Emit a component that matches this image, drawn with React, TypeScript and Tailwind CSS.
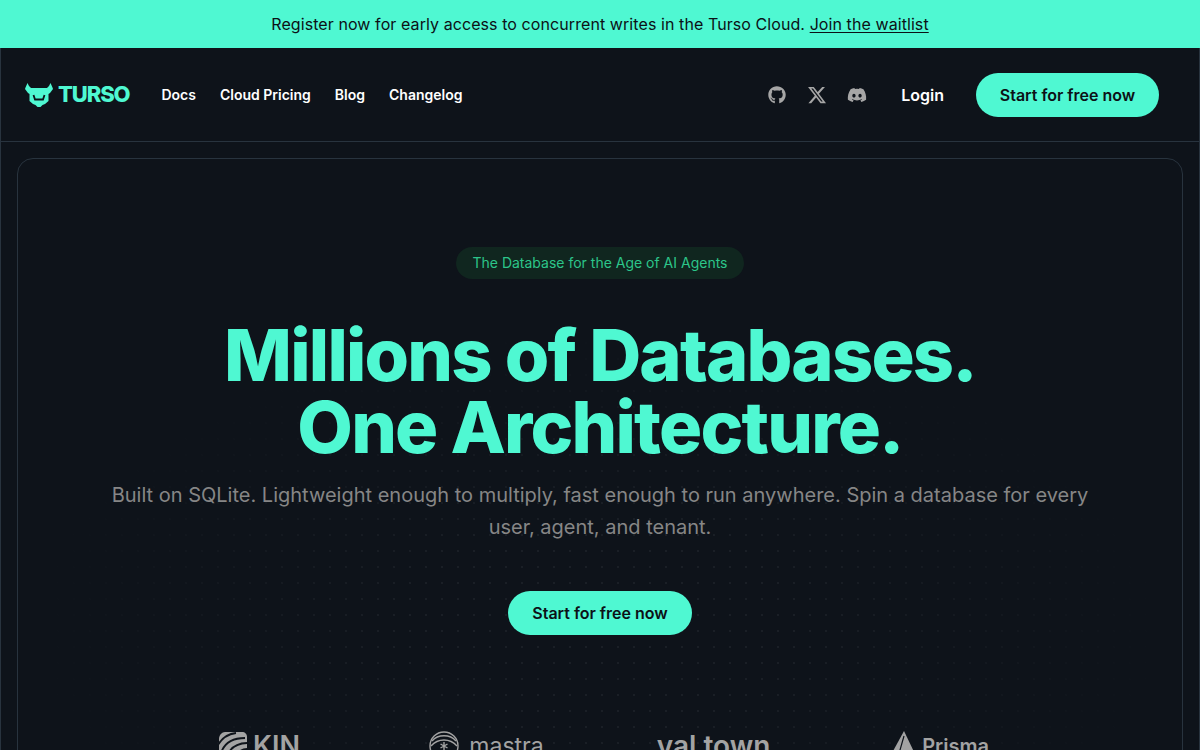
import { FaGithub, FaDiscord } from "react-icons/fa";
import { FaXTwitter } from "react-icons/fa6";

function BullLogo() {
  return (
    <svg width="28" height="24" viewBox="0 0 28 24" className="shrink-0">
      <path
        fill="#4ff8d2"
        d="M2.5 0 L4 3 L6 5 L22 5 L24 3 L25.5 0 L27.5 4.5 L28 6 L25 10 L23.5 11 L23.5 18 L20 21 L17.5 22 L15.5 24 L12.5 24 L10.5 22 L8 21 L4.5 18 L4.5 11 L3 10 L0 6 L.5 4.5 Z"
      />
      <path d="M8.5 12 L10 16.5 L18 16.5 L19.5 12" fill="none" stroke="#0e131a" strokeWidth="1.8" />
    </svg>
  );
}

function KinMark() {
  return (
    <svg width="28" height="28" viewBox="0 0 28 28">
      <path fill="#a3a3a3" d="M6 0 L23 0 C26 0 28 2 28 5 L28 20 C28 25 25 28 20 28 L9 28 C4 28 0 25 0 20 L0 7 C0 3 3 0 6 0 Z" />
      <path
        fill="none"
        stroke="#0e131a"
        strokeWidth="1.8"
        d="M-1 13 C3 6 9 2 17 1 M2 21 C5 12 12 6 26 6 M7 28 C9 19 15 11 29 11 M14 29 C16 23 20 17 29 17"
      />
    </svg>
  );
}

function MastraMark() {
  return (
    <svg width="30" height="30" viewBox="0 0 30 30" fill="none" stroke="#a3a3a3" strokeWidth="1.4">
      <circle cx="15" cy="15" r="14" />
      <path d="M3 10 C9 3 21 3 27 10 M2 15 C9 7 21 7 28 15" />
      <path d="M15 11 V19 M11.5 13 L18.5 17 M18.5 13 L11.5 17" />
    </svg>
  );
}

function PrismaMark() {
  return (
    <svg width="24" height="30" viewBox="0 0 24 30">
      <path fill="#a3a3a3" d="M12 0 L23.5 24 L4 30 L0 22 Z" />
      <path d="M12 5 L6 26" fill="none" stroke="#0e131a" strokeWidth="1.2" />
    </svg>
  );
}

export default function App() {
  return (
    <div className="h-screen overflow-hidden bg-[#0e131a] font-['Inter',sans-serif]">
      <div className="flex h-12 items-center justify-center bg-[#4ff8d2] text-base tracking-[0.005em] text-[#0c1116]">
        <span>
          Register now for early access to concurrent writes in the Turso Cloud.{" "}
          <a className="underline underline-offset-2">Join the waitlist</a>
        </span>
      </div>

      <div className="h-[702px] border-x border-[#28333e]">
        <header className="flex h-[94px] items-center justify-between border-b border-[#28333e] pl-6 pr-10">
          <div className="flex items-center">
            <div className="flex items-center gap-[5px]">
              <BullLogo />
              <span className="text-[22px] font-extrabold tracking-[-1.1px] text-[#4ff8d2]">TURSO</span>
            </div>
            <nav className="ml-8 flex items-center gap-6 text-sm font-semibold text-white">
              <a>Docs</a>
              <a>Cloud Pricing</a>
              <a>Blog</a>
              <a>Changelog</a>
            </nav>
          </div>
          <div className="flex items-center">
            <div className="flex items-center gap-5 text-[#a6a6a6]">
              <span className="flex w-5 justify-center"><FaGithub size={18} /></span>
              <span className="flex w-5 justify-center"><FaXTwitter size={20} /></span>
              <span className="flex w-5 justify-center"><FaDiscord size={20} /></span>
            </div>
            <a className="ml-[34px] text-base font-semibold text-white">Login</a>
            <button className="ml-8 h-11 w-[183px] rounded-full bg-[#4ff8d2] text-base font-semibold text-[#0c1116]">
              Start for free now
            </button>
          </div>
        </header>

        <main className="mx-4 mt-4 rounded-2xl border border-[#28333e] bg-[radial-gradient(ellipse_560px_300px_at_582px_470px,transparent_35%,#0e131a_100%),radial-gradient(#1a1f26_1px,transparent_1px)] [background-size:100%_100%,16px_16px] pt-[88px]">
          <div className="flex flex-col items-center">
            <div className="flex h-8 items-center rounded-full bg-[#10261f] px-4 text-sm text-[#2cc58a]">
              The Database for the Age of AI Agents
            </div>
            <h1 className="mt-[40px] text-center text-[72px] font-extrabold leading-[72px] tracking-[-0.025em] text-[#4ff8d2]">
              Millions of Databases.
              <br />
              One Architecture.
            </h1>
            <p className="mt-4 w-[1000px] text-center text-xl leading-8 text-[#868686]">
              Built on SQLite. Lightweight enough to multiply, fast enough to run anywhere. Spin a database for every user, agent, and tenant.
            </p>
            <button className="mt-12 h-11 w-[184px] rounded-full bg-[#4ff8d2] text-base font-semibold text-[#0c1116]">
              Start for free now
            </button>
            <div className="mt-[96px] grid h-10 w-[908px] grid-cols-4 items-start justify-items-center text-[#a3a3a3]">
              <div className="flex items-center gap-[6px]">
                <KinMark />
                <span className="text-[27px] font-semibold leading-[30px]">KIN</span>
              </div>
              <div className="flex items-center gap-[10px]">
                <MastraMark />
                <span className="text-[23px] leading-[30px]">mastra</span>
              </div>
              <span className="text-[28px] font-semibold leading-[30px]">val town</span>
              <div className="flex items-center gap-[6px]">
                <PrismaMark />
                <span className="text-[20px] font-semibold leading-[30px]">Prisma</span>
              </div>
            </div>
          </div>
        </main>
      </div>
    </div>
  );
}
